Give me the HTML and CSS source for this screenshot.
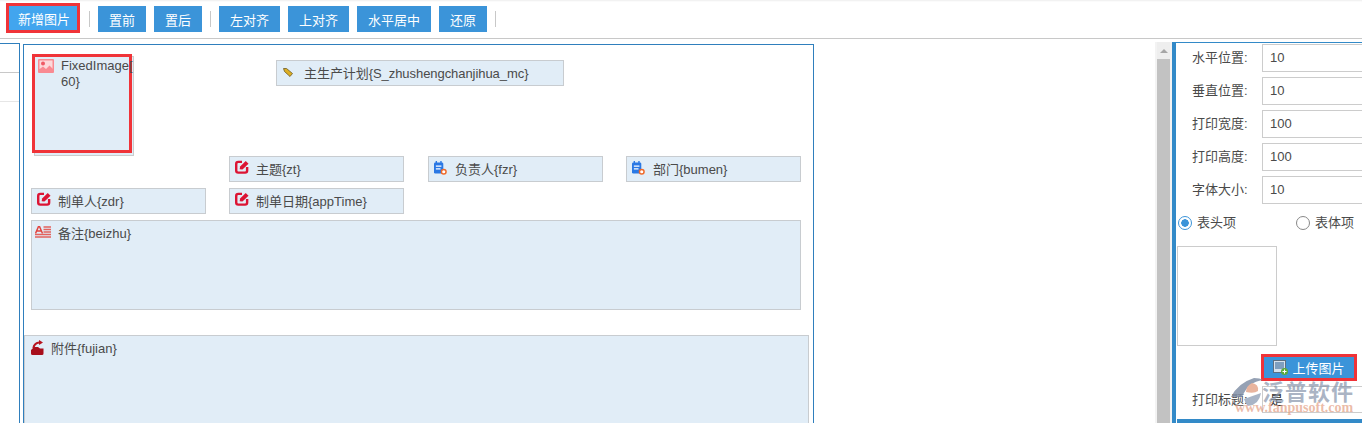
FILE: index.html
```html
<!DOCTYPE html>
<html lang="zh">
<head>
<meta charset="utf-8">
<title>打印模板设计</title>
<link rel="stylesheet" href="styles.css">
</head>
<body>
<header class="toolbar">
  <button class="btn btn-add">新增图片</button>
  <i class="sep sep-first"></i>
  <button class="btn btn-s">置前</button>
  <button class="btn btn-s">置后</button>
  <i class="sep"></i>
  <button class="btn btn-m">左对齐</button>
  <button class="btn btn-m">上对齐</button>
  <button class="btn btn-l">水平居中</button>
  <button class="btn btn-s">还原</button>
  <i class="sep"></i>
</header>
<main class="workspace">
  <aside class="left-pane"><div class="left-row1"></div><div class="left-row2"></div></aside>
  <section class="canvas">
    <div class="field f-image">
      <svg class="ic ic-image" width="16" height="14" viewBox="0 0 16 14"><rect width="16" height="14" rx="1" fill="#f98a92"/><rect x="1.500" y="1.500" width="13" height="8.500" fill="#fdd9db"/><circle cx="5" cy="4.500" r="2" fill="#ef5a65"/><path d="M1 13V10.500L5 7.500L8 10L11.500 6.500L15 10V13Z" fill="#f98a92"/></svg>
      <span class="label">FixedImage[<br>60}</span>
    </div>
    <div class="field f-plan">
      <svg class="ic ic-tag" width="10" height="9" viewBox="0 0 10 9"><path d="M0.500 0.500L3.500 0.500L9.500 5.500L7 8.500L1.500 3.500Z" fill="#dcae24" stroke="#6c5a24" stroke-width=".8"/></svg>
      <span>主生产计划{S_zhushengchanjihua_mc}</span>
    </div>
    <div class="field f-zt"><svg class="ic ic-edit" width="14" height="14" viewBox="0 0 15 15"><use href="#edit"/></svg><span>主题{zt}</span></div>
    <div class="field f-fzr"><svg class="ic ic-book" width="13" height="14" viewBox="0 0 14 15"><use href="#book"/></svg><span>负责人{fzr}</span></div>
    <div class="field f-bumen"><svg class="ic ic-book" width="13" height="14" viewBox="0 0 14 15"><use href="#book"/></svg><span>部门{bumen}</span></div>
    <div class="field f-zdr"><svg class="ic ic-edit" width="14" height="14" viewBox="0 0 15 15"><use href="#edit"/></svg><span>制单人{zdr}</span></div>
    <div class="field f-date"><svg class="ic ic-edit" width="14" height="14" viewBox="0 0 15 15"><use href="#edit"/></svg><span>制单日期{appTime}</span></div>
    <div class="field f-note">
      <svg class="ic" width="16" height="12" viewBox="0 0 16 12"><path d="M0.500 7.500L3.500 0.500H4.500L7.500 7.500M2 5H6" fill="none" stroke="#e2443f" stroke-width="1.500"/><path d="M8.500 1H16M8.500 3.500H16M8.500 6H16M0 8.500H16M0 11H16" stroke="#e2625d" stroke-width="1.400"/></svg>
      <span>备注{beizhu}</span>
    </div>
    <div class="field f-file">
      <svg class="ic ic-file" width="13" height="15" viewBox="0 0 13 15"><path d="M1.500 15Q0 15 0 13.500L0 10L3 7H7L9 8.500H12.500V13.500Q12.500 15 11 15Z" fill="#a80f1c"/><path d="M2.500 8Q3 3.500 8 2.500" stroke="#b8141f" stroke-width="2.200" fill="none"/><path d="M8 0L12 2.500L8 5Z" fill="#b8141f"/></svg>
      <span>附件{fujian}</span>
    </div>
  </section>
  <div class="gutter"><div class="scrollbar"><i class="arrow"></i><div class="thumb"></div></div></div>
  <aside class="props">
    <div class="prop"><label>水平位置:</label><div class="input">10</div></div>
    <div class="prop"><label>垂直位置:</label><div class="input">10</div></div>
    <div class="prop"><label>打印宽度:</label><div class="input">100</div></div>
    <div class="prop"><label>打印高度:</label><div class="input">100</div></div>
    <div class="prop"><label>字体大小:</label><div class="input">10</div></div>
    <div class="radios">
      <span class="radio radio-on"><i></i>表头项</span>
      <span class="radio"><i></i>表体项</span>
    </div>
    <div class="preview"></div>
    <div class="upload-row">
      <button class="btn btn-upload">
        <svg width="15" height="15" viewBox="0 0 15 15"><rect x="0.500" y="0.500" width="12" height="12" fill="#d7e3ee" stroke="#5c6f82"/><rect x="2" y="2" width="9" height="7" fill="#7f9fbf"/><circle cx="11.500" cy="11.500" r="3.500" fill="#5cab3c"/><path d="M11.500 9.500V13.500M9.500 11.500H13.500" stroke="#fff"/></svg>
        上传图片
      </button>
    </div>
    <div class="prop prop-title"><label>打印标题:</label><div class="input input-value">是</div></div>
    <div class="props-foot"></div>
  </aside>
  <div class="watermark">
    <svg class="wm-logo" width="34" height="30" viewBox="0 0 34 30"><path d="M1 19Q8 5 24 0Q30 0 33 2Q18 4 12 19Z" fill="#8391a8"/><path d="M22 5Q29 6 28 13Q24 16 16 14Q16 8 22 5Z" fill="#e5a88e"/><path d="M14 21L31 15Q29 27 18 28Q15 25 14 21Z" fill="#9aa8bd"/></svg>
    <b class="wm-name">泛普软件</b>
    <em class="wm-url">www.fanpusoft.com</em>
  </div>
</main>
<svg class="defs" width="0" height="0">
  <symbol id="edit" viewBox="0 0 15 15"><path d="M7.500 2H3.500Q1.300 2 1.300 4.200V11.300Q1.300 13.500 3.500 13.500H10.800Q13 13.500 13 11.300V7.500" fill="none" stroke="#dc1434" stroke-width="2.600"/><path d="M5 10L5.500 7L11.500 1L14.500 4L8 10.300Z" fill="#dc1434"/></symbol>
  <symbol id="book" viewBox="0 0 14 15"><rect x="0" y="1.500" width="10" height="12" rx="1.500" fill="#2a78e4"/><path d="M2.500 0V3M7.500 0V3" stroke="#2a78e4" stroke-width="1.500"/><path d="M2 5.500H8M2 8.500H7" stroke="#fff" stroke-width="1.200"/><circle cx="10.500" cy="11.500" r="2.500" fill="#fff" stroke="#ef6a2b" stroke-width="1.600"/></symbol>
</svg>
</body>
</html>
```
FILE: styles.css
```css
* { box-sizing: border-box; }
html, body { margin: 0; height: 423px; overflow: hidden; background: #fff; }
body { font: 13px/1.2 "Liberation Sans", "Noto Sans CJK SC", sans-serif; color: #4a4a4a; }
.defs { position: absolute; }

.toolbar {
  height: 39px;
  display: flex;
  align-items: flex-start;
  gap: 8px;
  padding: 6px 0 0 8px;
  border-bottom: 1px solid #c8c8c8;
  box-shadow: inset 0 2px 2px -1px #eee;
}
.btn {
  height: 26px;
  padding: 0;
  border: 0;
  background: #3b94d9;
  color: #fff;
  font: 13px "Liberation Sans", "Noto Sans CJK SC", sans-serif;
}
.btn-add {
  width: 74px;
  height: 30px;
  margin: -3px 0 0 -2px;
  padding-left: 2px;
  border: 3px solid #f03338;
  background: #42a5ee;
}
.btn-s { width: 48px; }
.btn-m { width: 61px; }
.btn-l { width: 74px; }
.sep { width: 1px; height: 16px; margin: 5px 0 0; background: #c8c8c8; }
.sep-first { margin-left: 1px; }

.workspace { height: 384px; display: flex; position: relative; }

.left-pane {
  width: 20px;
  margin-top: 4px;
  border-top: 1px solid #2f7fbd;
  border-right: 1px solid #2f7fbd;
}
.left-row1 { height: 29px; border-bottom: 1px solid #c8c8c8; }
.left-row2 { height: 29px; border-bottom: 1px solid #e6e6e6; }

.canvas {
  position: relative;
  width: 791px;
  margin: 5px 0 0 3px;
  height: 380px;
  border: 1px solid #2f7fbd;
  border-bottom: 0;
}
.field {
  position: absolute;
  display: flex;
  align-items: flex-start;
  gap: 7px;
  height: 26px;
  width: 175px;
  padding: 5px 0 0 5px;
  background: #e1edf7;
  border: 1px solid #c8ccd0;
  line-height: 15px;
  white-space: nowrap;
}
.ic { flex: none; }
.ic-edit { margin-top: -2px; }
.ic-book { margin: -1px 1px 0 0; }
.f-image {
  left: 10px; top: 11px; width: 100px; height: 100px;
  padding: 1px 0 0 3px;
  line-height: 16px;
  border: 1px solid #ccc;
}
.f-image::after {
  content: "";
  box-sizing: border-box;
  position: absolute;
  left: -3px;
  top: -3px;
  width: 100px;
  height: 99px;
  border: 3px solid #f03338;
}
.f-image .label { position: relative; z-index: 1; }
.ic-image { margin-top: 1px; }
.f-plan { left: 252px; top: 15px; width: 288px; padding-left: 6px; gap: 11px; letter-spacing: -.06px; }
.ic-tag { margin-top: 2px; }
.f-zt { left: 205px; top: 111px; }
.f-fzr { left: 404px; top: 111px; }
.f-bumen { left: 602px; top: 111px; }
.f-zdr { left: 7px; top: 143px; }
.f-date { left: 205px; top: 143px; }
.f-note { left: 7px; top: 175px; width: 770px; height: 90px; padding-left: 3px; gap: 7px; }
.f-file { left: 0; top: 290px; width: 785px; height: 100px; padding-left: 6px; gap: 7px; }
.ic-file { margin-top: -1px; }

.gutter { position: absolute; left: 1155px; width: 17px; top: 3px; bottom: 0; background: #f3f3f3; }
.scrollbar { position: absolute; left: 2px; top: 0; bottom: 0; width: 13px; background: #eee; }
.arrow { position: absolute; left: 3px; top: 7px; border: 4px solid transparent; border-top: 0; border-bottom: 4px solid #a6a6a6; }
.thumb { position: absolute; left: 0; top: 17px; right: 0; bottom: 0; background: #c2c2c2; }

.props {
  position: absolute;
  left: 1172px;
  top: 3px;
  right: 0;
  bottom: 0;
  padding-top: 1px;
  border-left: 4px solid #338ac8;
  border-top: 1px solid #338ac8;
  background: #fff;
  overflow: hidden;
}
.prop { display: flex; align-items: flex-start; height: 33px; padding-left: 16px; }
.prop label { width: 70px; flex: none; line-height: 27px; color: #4a4a4a; }
.input {
  width: 110px;
  flex: none;
  height: 28px;
  line-height: 25px;
  padding-left: 7px;
  border: 1px solid #ccc;
}
.radios { height: 26px; display: flex; align-items: center; padding: 1px 0 0 2px; gap: 60px; }
.radio { display: flex; align-items: center; gap: 5px; }
.radio i { width: 14px; height: 14px; border-radius: 50%; border: 1px solid #888; background: #fff; }
.radio-on i { border-color: #3b94d9; background: radial-gradient(circle, #3b94d9 0 3.500px, #fff 4px); }
.preview { width: 100px; height: 100px; margin: 11px 0 0 1px; border: 1px solid #ccc; }
.upload-row { display: flex; margin: 8px 0 0 85px; }
.btn-upload {
  width: 96px;
  height: 27px;
  display: flex;
  align-items: center;
  justify-content: center;
  gap: 4px;
  border: 3px solid #f03338;
  background: #3b94d9;
}
.prop-title { margin-top: 5px; height: 27px; }
.input-value { height: 27px; line-height: 25px; color: #333; padding-left: 7px; }
.props-foot { position: absolute; left: 1px; right: 0; bottom: 0; height: 4px; background: #338ac8; }

.watermark {
  position: absolute;
  left: 1230px;
  top: 339px;
  width: 125px;
  height: 38px;
  pointer-events: none;
}
.wm-logo { position: absolute; left: 0; top: 0; opacity: .85; }
.wm-name {
  position: absolute;
  left: 32px;
  top: -1px;
  font: bold 22px/26px "Noto Sans CJK SC", sans-serif;
  color: #8593aab3;
  letter-spacing: 1px;
  white-space: nowrap;
}
.wm-url {
  position: absolute;
  left: 5px;
  top: 23px;
  font: normal bold 14px/14px "Liberation Serif", serif;
  color: #e39e83b3;
  white-space: nowrap;
}
```
